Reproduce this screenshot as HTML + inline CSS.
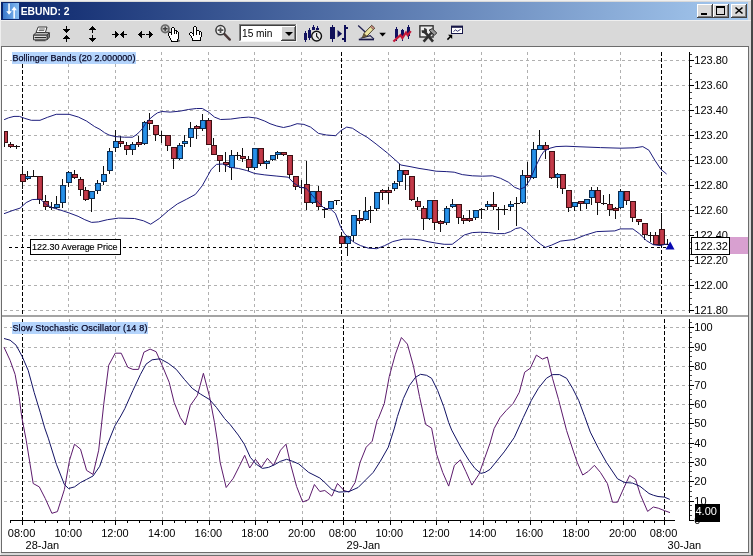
<!DOCTYPE html>
<html><head><meta charset="utf-8"><title>EBUND: 2</title>
<style>html,body{margin:0;padding:0;background:#d9d9d9;overflow:hidden}</style></head>
<body>
<svg width="753" height="556" viewBox="0 0 753 556" style="display:block;will-change:transform;-webkit-font-smoothing:antialiased">
<defs>
<linearGradient id="tg" x1="0" x2="1" y1="0" y2="0"><stop offset="0" stop-color="#0a246a"/><stop offset="1" stop-color="#a6caf0"/></linearGradient>
<linearGradient id="ig" x1="0" x2="1" y1="0" y2="0"><stop offset="0" stop-color="#3a78cc"/><stop offset="1" stop-color="#86bcf2"/></linearGradient>
<linearGradient id="cb" x1="0" x2="1" y1="0" y2="0"><stop offset="0" stop-color="#1a7cd4"/><stop offset="0.5" stop-color="#2c98ee"/><stop offset="1" stop-color="#1a7cd4"/></linearGradient>
<linearGradient id="cr" x1="0" x2="1" y1="0" y2="0"><stop offset="0" stop-color="#b02c3c"/><stop offset="0.5" stop-color="#c8404e"/><stop offset="1" stop-color="#b02c3c"/></linearGradient>
</defs>
<rect width="753" height="556" fill="#d9d9d9"/>
<g shape-rendering="crispEdges">
<rect x="0" y="0" width="753" height="1" fill="#efefef"/><rect x="0" y="0" width="1" height="556" fill="#efefef"/>
<rect x="1" y="2" width="747" height="18" fill="url(#tg)"/>
<rect x="3" y="3" width="16" height="16" fill="url(#ig)"/>
</g><path d="M8.3 3.6h1.5v7.6h2l-2.75 3.5l-2.75-3.5h2z M13.4 18.6h1.5v-8.4h2l-2.75-3.6l-2.75 3.6h2z" fill="#fff"/><g shape-rendering="crispEdges">
</g>
<text x="20.7" y="15" font-family="Liberation Sans, Arial, sans-serif" font-size="11" font-weight="bold" fill="#fff" textLength="48.8" lengthAdjust="spacingAndGlyphs">EBUND: 2</text>
<g shape-rendering="crispEdges"><rect x="697" y="4" width="16" height="14" fill="#404040"/><rect x="697" y="4" width="15" height="13" fill="#fff"/><rect x="698" y="5" width="14" height="12" fill="#808080"/><rect x="698" y="5" width="13" height="11" fill="#d9d9d9"/></g>
<g shape-rendering="crispEdges"><rect x="713" y="4" width="16" height="14" fill="#404040"/><rect x="713" y="4" width="15" height="13" fill="#fff"/><rect x="714" y="5" width="14" height="12" fill="#808080"/><rect x="714" y="5" width="13" height="11" fill="#d9d9d9"/></g>
<g shape-rendering="crispEdges"><rect x="731" y="4" width="16" height="14" fill="#404040"/><rect x="731" y="4" width="15" height="13" fill="#fff"/><rect x="732" y="5" width="14" height="12" fill="#808080"/><rect x="732" y="5" width="13" height="11" fill="#d9d9d9"/></g>
<g shape-rendering="crispEdges" fill="#000">
<rect x="701" y="13" width="6" height="2"/>
<path d="M716 6h9v9h-9z M717 8v6h7v-6z" fill-rule="evenodd"/>
</g>
<path d="M735.5 7.5l7 6m0-6l-7 6" stroke="#000" stroke-width="1.6" fill="none"/>
<g shape-rendering="crispEdges">
<rect x="0" y="20" width="753" height="1" fill="#efefef"/>
</g>
<g stroke="#383838" stroke-width="1" fill="none" stroke-linejoin="round">
<path d="M36 32.5l2.2-5.5h8.8l-1.6 5.5z" fill="#fff"/>
<path d="M39.2 29h5.6M38.6 30.6h5.6" stroke="#505050" stroke-width=".9"/>
<path d="M33.5 35.2l2.5-2.7h9.6l3.6.2-2.2 2.5z" fill="#b8b8b8"/>
<path d="M47 35.2l2.4-2.4v4.4l-2.4 2.6z" fill="#808080"/>
<rect x="33.5" y="35.2" width="13.5" height="4.6" fill="#dcdcdc"/>
<path d="M34.6 37.6h11.4" stroke="#202020" stroke-width="1.1"/>
<path d="M35 40.6h10.6" stroke="#505050" stroke-width="1.3"/>
</g>
<g shape-rendering="crispEdges"><rect x="66" y="26" width="1" height="1" fill="#000"/><rect x="66" y="27" width="1" height="1" fill="#000"/><rect x="66" y="28" width="1" height="1" fill="#000"/><rect x="63" y="29" width="7" height="1" fill="#000"/><rect x="64" y="30" width="5" height="1" fill="#000"/><rect x="65" y="31" width="3" height="1" fill="#000"/><rect x="66" y="32" width="1" height="1" fill="#000"/></g>
<g shape-rendering="crispEdges"><rect x="66" y="35" width="1" height="1" fill="#000"/><rect x="65" y="36" width="3" height="1" fill="#000"/><rect x="64" y="37" width="5" height="1" fill="#000"/><rect x="63" y="38" width="7" height="1" fill="#000"/><rect x="66" y="39" width="1" height="1" fill="#000"/><rect x="66" y="40" width="1" height="1" fill="#000"/><rect x="66" y="41" width="1" height="1" fill="#000"/></g>
<g shape-rendering="crispEdges"><rect x="92" y="26" width="1" height="1" fill="#000"/><rect x="91" y="27" width="3" height="1" fill="#000"/><rect x="90" y="28" width="5" height="1" fill="#000"/><rect x="89" y="29" width="7" height="1" fill="#000"/><rect x="92" y="30" width="1" height="1" fill="#000"/><rect x="92" y="31" width="1" height="1" fill="#000"/><rect x="92" y="32" width="1" height="1" fill="#000"/></g>
<g shape-rendering="crispEdges"><rect x="92" y="35" width="1" height="1" fill="#000"/><rect x="92" y="36" width="1" height="1" fill="#000"/><rect x="92" y="37" width="1" height="1" fill="#000"/><rect x="89" y="38" width="7" height="1" fill="#000"/><rect x="90" y="39" width="5" height="1" fill="#000"/><rect x="91" y="40" width="3" height="1" fill="#000"/><rect x="92" y="41" width="1" height="1" fill="#000"/></g>
<g shape-rendering="crispEdges"><rect x="115" y="31" width="1" height="1" fill="#000"/><rect x="115" y="32" width="2" height="1" fill="#000"/><rect x="115" y="33" width="3" height="1" fill="#000"/><rect x="112" y="34" width="7" height="1" fill="#000"/><rect x="115" y="35" width="3" height="1" fill="#000"/><rect x="115" y="36" width="2" height="1" fill="#000"/><rect x="115" y="37" width="1" height="1" fill="#000"/></g>
<g shape-rendering="crispEdges"><rect x="123" y="31" width="1" height="1" fill="#000"/><rect x="122" y="32" width="2" height="1" fill="#000"/><rect x="121" y="33" width="3" height="1" fill="#000"/><rect x="120" y="34" width="7" height="1" fill="#000"/><rect x="121" y="35" width="3" height="1" fill="#000"/><rect x="122" y="36" width="2" height="1" fill="#000"/><rect x="123" y="37" width="1" height="1" fill="#000"/></g>
<g shape-rendering="crispEdges"><rect x="141" y="31" width="1" height="1" fill="#000"/><rect x="140" y="32" width="2" height="1" fill="#000"/><rect x="139" y="33" width="3" height="1" fill="#000"/><rect x="138" y="34" width="7" height="1" fill="#000"/><rect x="139" y="35" width="3" height="1" fill="#000"/><rect x="140" y="36" width="2" height="1" fill="#000"/><rect x="141" y="37" width="1" height="1" fill="#000"/></g>
<g shape-rendering="crispEdges"><rect x="149" y="31" width="1" height="1" fill="#000"/><rect x="149" y="32" width="2" height="1" fill="#000"/><rect x="149" y="33" width="3" height="1" fill="#000"/><rect x="146" y="34" width="7" height="1" fill="#000"/><rect x="149" y="35" width="3" height="1" fill="#000"/><rect x="149" y="36" width="2" height="1" fill="#000"/><rect x="149" y="37" width="1" height="1" fill="#000"/></g>
<circle cx="165.2" cy="28.8" r="3.8" fill="#c8c8c8" stroke="#686868" stroke-width="1.7"/><path d="M162.8 28.8h4.8M165.2 26.4v4.8" stroke="#404040" stroke-width="1.5"/>
<path d="M168 31l11.6 10.6" stroke="#606060" stroke-width="2"/>
<g shape-rendering="crispEdges"><rect x="172" y="27" width="2" height="1" fill="#000"/><rect x="171" y="28" width="1" height="1" fill="#000"/><rect x="172" y="28" width="2" height="1" fill="#fff"/><rect x="174" y="28" width="1" height="1" fill="#000"/><rect x="171" y="29" width="1" height="1" fill="#000"/><rect x="172" y="29" width="2" height="1" fill="#fff"/><rect x="174" y="29" width="1" height="1" fill="#000"/><rect x="171" y="30" width="1" height="1" fill="#000"/><rect x="172" y="30" width="2" height="1" fill="#fff"/><rect x="174" y="30" width="3" height="1" fill="#000"/><rect x="171" y="31" width="1" height="1" fill="#000"/><rect x="172" y="31" width="2" height="1" fill="#fff"/><rect x="174" y="31" width="1" height="1" fill="#000"/><rect x="175" y="31" width="1" height="1" fill="#fff"/><rect x="176" y="31" width="2" height="1" fill="#000"/><rect x="169" y="32" width="3" height="1" fill="#000"/><rect x="172" y="32" width="2" height="1" fill="#fff"/><rect x="174" y="32" width="1" height="1" fill="#000"/><rect x="175" y="32" width="1" height="1" fill="#fff"/><rect x="176" y="32" width="1" height="1" fill="#000"/><rect x="177" y="32" width="1" height="1" fill="#fff"/><rect x="178" y="32" width="1" height="1" fill="#000"/><rect x="168" y="33" width="1" height="1" fill="#000"/><rect x="169" y="33" width="2" height="1" fill="#fff"/><rect x="171" y="33" width="1" height="1" fill="#000"/><rect x="172" y="33" width="2" height="1" fill="#fff"/><rect x="174" y="33" width="1" height="1" fill="#000"/><rect x="175" y="33" width="1" height="1" fill="#fff"/><rect x="176" y="33" width="1" height="1" fill="#000"/><rect x="177" y="33" width="1" height="1" fill="#fff"/><rect x="178" y="33" width="1" height="1" fill="#000"/><rect x="168" y="34" width="1" height="1" fill="#000"/><rect x="169" y="34" width="2" height="1" fill="#fff"/><rect x="171" y="34" width="1" height="1" fill="#000"/><rect x="172" y="34" width="6" height="1" fill="#fff"/><rect x="178" y="34" width="1" height="1" fill="#000"/><rect x="168" y="35" width="1" height="1" fill="#000"/><rect x="169" y="35" width="9" height="1" fill="#fff"/><rect x="178" y="35" width="1" height="1" fill="#000"/><rect x="169" y="36" width="1" height="1" fill="#000"/><rect x="170" y="36" width="8" height="1" fill="#fff"/><rect x="178" y="36" width="1" height="1" fill="#000"/><rect x="169" y="37" width="1" height="1" fill="#000"/><rect x="170" y="37" width="8" height="1" fill="#fff"/><rect x="178" y="37" width="1" height="1" fill="#000"/><rect x="170" y="38" width="1" height="1" fill="#000"/><rect x="171" y="38" width="7" height="1" fill="#fff"/><rect x="178" y="38" width="1" height="1" fill="#000"/><rect x="170" y="39" width="1" height="1" fill="#000"/><rect x="171" y="39" width="6" height="1" fill="#fff"/><rect x="177" y="39" width="1" height="1" fill="#000"/><rect x="171" y="40" width="1" height="1" fill="#000"/><rect x="172" y="40" width="5" height="1" fill="#fff"/><rect x="177" y="40" width="1" height="1" fill="#000"/><rect x="171" y="41" width="7" height="1" fill="#000"/></g>
<g shape-rendering="crispEdges"><rect x="194" y="26" width="2" height="1" fill="#000"/><rect x="193" y="27" width="1" height="1" fill="#000"/><rect x="194" y="27" width="2" height="1" fill="#fff"/><rect x="196" y="27" width="1" height="1" fill="#000"/><rect x="193" y="28" width="1" height="1" fill="#000"/><rect x="194" y="28" width="2" height="1" fill="#fff"/><rect x="196" y="28" width="1" height="1" fill="#000"/><rect x="193" y="29" width="1" height="1" fill="#000"/><rect x="194" y="29" width="2" height="1" fill="#fff"/><rect x="196" y="29" width="1" height="1" fill="#000"/><rect x="193" y="30" width="1" height="1" fill="#000"/><rect x="194" y="30" width="2" height="1" fill="#fff"/><rect x="196" y="30" width="3" height="1" fill="#000"/><rect x="193" y="31" width="1" height="1" fill="#000"/><rect x="194" y="31" width="2" height="1" fill="#fff"/><rect x="196" y="31" width="1" height="1" fill="#000"/><rect x="197" y="31" width="2" height="1" fill="#fff"/><rect x="199" y="31" width="2" height="1" fill="#000"/><rect x="190" y="32" width="2" height="1" fill="#000"/><rect x="193" y="32" width="1" height="1" fill="#000"/><rect x="194" y="32" width="2" height="1" fill="#fff"/><rect x="196" y="32" width="1" height="1" fill="#000"/><rect x="197" y="32" width="2" height="1" fill="#fff"/><rect x="199" y="32" width="1" height="1" fill="#000"/><rect x="200" y="32" width="1" height="1" fill="#fff"/><rect x="201" y="32" width="1" height="1" fill="#000"/><rect x="189" y="33" width="1" height="1" fill="#000"/><rect x="190" y="33" width="2" height="1" fill="#fff"/><rect x="192" y="33" width="2" height="1" fill="#000"/><rect x="194" y="33" width="2" height="1" fill="#fff"/><rect x="196" y="33" width="1" height="1" fill="#000"/><rect x="197" y="33" width="2" height="1" fill="#fff"/><rect x="199" y="33" width="1" height="1" fill="#000"/><rect x="200" y="33" width="1" height="1" fill="#fff"/><rect x="201" y="33" width="1" height="1" fill="#000"/><rect x="189" y="34" width="1" height="1" fill="#000"/><rect x="190" y="34" width="3" height="1" fill="#fff"/><rect x="193" y="34" width="1" height="1" fill="#000"/><rect x="194" y="34" width="2" height="1" fill="#fff"/><rect x="196" y="34" width="1" height="1" fill="#000"/><rect x="197" y="34" width="2" height="1" fill="#fff"/><rect x="199" y="34" width="1" height="1" fill="#000"/><rect x="200" y="34" width="1" height="1" fill="#fff"/><rect x="201" y="34" width="1" height="1" fill="#000"/><rect x="190" y="35" width="1" height="1" fill="#000"/><rect x="191" y="35" width="2" height="1" fill="#fff"/><rect x="193" y="35" width="1" height="1" fill="#000"/><rect x="194" y="35" width="7" height="1" fill="#fff"/><rect x="201" y="35" width="1" height="1" fill="#000"/><rect x="191" y="36" width="1" height="1" fill="#000"/><rect x="192" y="36" width="9" height="1" fill="#fff"/><rect x="201" y="36" width="1" height="1" fill="#000"/><rect x="191" y="37" width="1" height="1" fill="#000"/><rect x="192" y="37" width="8" height="1" fill="#fff"/><rect x="200" y="37" width="1" height="1" fill="#000"/><rect x="192" y="38" width="1" height="1" fill="#000"/><rect x="193" y="38" width="7" height="1" fill="#fff"/><rect x="200" y="38" width="1" height="1" fill="#000"/><rect x="192" y="39" width="1" height="1" fill="#000"/><rect x="193" y="39" width="7" height="1" fill="#fff"/><rect x="200" y="39" width="1" height="1" fill="#000"/><rect x="192" y="40" width="9" height="1" fill="#000"/></g>
<path d="M224 33.6l5.8 6" stroke="#4c3a3a" stroke-width="2.4" stroke-linecap="round"/>
<circle cx="220.5" cy="30.2" r="4.6" fill="#f0f0f0" stroke="#383838" stroke-width="1.5"/><path d="M217.7 30.2h5.6M220.5 27.4v5.6" stroke="#505050" stroke-width="1.8"/>
<g shape-rendering="crispEdges">
<rect x="239" y="24" width="58" height="18" fill="#f4f4f4"/>
<rect x="239" y="24" width="57" height="17" fill="#808080"/>
<rect x="240" y="25" width="56" height="16" fill="#a8a8a8"/>
<rect x="240" y="25" width="55" height="15" fill="#404040"/>
<rect x="241" y="26" width="55" height="15" fill="#fff"/>
<rect x="281" y="26" width="15" height="15" fill="#404040"/><rect x="281" y="26" width="14" height="14" fill="#fff"/><rect x="282" y="27" width="13" height="13" fill="#808080"/><rect x="282" y="27" width="12" height="12" fill="#d0d0d0"/>
</g>
<path d="M285 32h8l-4 4z" fill="#000"/>
<text x="242" y="37" font-family="Liberation Sans, Arial, sans-serif" font-size="11" fill="#000" textLength="30.5" lengthAdjust="spacingAndGlyphs">15 min</text>
<g shape-rendering="crispEdges" fill="#121260">
<rect x="305" y="31" width="1" height="11"/><rect x="304" y="33" width="3" height="7"/>
<rect x="309" y="28" width="1" height="12"/><rect x="308" y="30" width="3" height="8"/>
<rect x="313" y="25" width="1" height="3"/><rect x="312" y="27" width="3" height="3"/>
<rect x="317" y="26" width="1" height="3"/><rect x="316" y="28" width="3" height="2"/>
</g>
<circle cx="316.6" cy="36.1" r="4.9" fill="#ececec" stroke="#101010" stroke-width="1.4"/><path d="M316.6 33v3.2l2.2 2.4" stroke="#101010" stroke-width="1.1" fill="none"/>
<g shape-rendering="crispEdges" fill="#10105a">
<rect x="332" y="25" width="1" height="17"/><rect x="330" y="27" width="5" height="12"/>
<rect x="344" y="25" width="2" height="17"/><rect x="346" y="27" width="2" height="2"/><rect x="342" y="38" width="2" height="2"/>
</g>
<path d="M337.5 30v7.4l4.6-3.7z" fill="#10105a"/>
<path d="M358.2 25.5l8.3 7.7" stroke="#202050" stroke-width="1.3" fill="none"/>
<path d="M358.8 39.5h15.2" stroke="#181848" stroke-width="1.7" fill="none"/>
<path d="M360.6 38.2l9.6-2.6 3.8 3.6" stroke="#202050" stroke-width="1.1" fill="none"/>
<path d="M362.4 37.5l1.7-4.3 7.5-7.8 3 2.7-7.6 8z" fill="#ece4a2" stroke="#403820" stroke-width=".9" stroke-linejoin="round"/>
<path d="M362.4 37.5l1.7-4.3 2.9 2.9z" fill="#6a5838"/>
<path d="M370.3 26.8l1.3-1.4 3 2.7-1.2 1.4z" fill="#d89090" stroke="#403820" stroke-width=".6"/>
<path d="M379.3 32.8h6.6l-3.3 3.8z" fill="#000"/>
<g shape-rendering="crispEdges" fill="#121260">
<rect x="396" y="27" width="1" height="14"/><rect x="395" y="29" width="3" height="9"/>
<rect x="402" y="29" width="1" height="12"/><rect x="401" y="30" width="3" height="7"/>
<rect x="408" y="25" width="1" height="14"/><rect x="407" y="27" width="3" height="9"/>
</g>
<path d="M393.4 41.5l7-6.4 2 3 3.6-5.6 1.6 2.6 3.2-4" stroke="#c41838" stroke-width="2.2" fill="none"/>
<rect x="419.9" y="25.8" width="13.2" height="11.2" fill="#ececec" stroke="#303030" stroke-width="1.4"/>
<path d="M423.6 41.6l8.6-9.6" stroke="#303030" stroke-width="2.6" fill="none"/>
<path d="M433 41.6l-8-9.4" stroke="#303030" stroke-width="2.6" fill="none"/>
<path d="M421.5 30.2h2.6v-2.4l2.6 1.2.4 3-2.2 1.6-3-.8z" fill="#303030"/>
<path d="M429 30.2l3.2-1.6 4.6 4.4-2.4 2.2z" fill="#989898" stroke="#303030" stroke-width="1"/>
<rect x="451.5" y="26.5" width="11" height="7" fill="#fff" stroke="#181848" stroke-width="1"/><rect x="451" y="25.6" width="12" height="2.2" fill="#181848"/>
<path d="M453.5 31.5l2-1.6 2 1.4 3.2-2" stroke="#202060" stroke-width=".9" fill="none"/>
<path d="M447.4 39.6l3.6-3.6" stroke="#000" stroke-width="1.5"/><path d="M448 34.8h4.2v4.2z" fill="#000"/>
<g shape-rendering="crispEdges">
<rect x="1" y="46" width="748" height="507" fill="#6c6c6c"/>
<rect x="751" y="0" width="2" height="556" fill="#484848"/>
<rect x="0" y="555" width="753" height="1" fill="#707070"/>
<rect x="2" y="47" width="746" height="505" fill="#fff"/>
<rect x="2" y="315" width="746" height="2" fill="#a4a4a4"/>
</g>
<g shape-rendering="crispEdges" stroke="#b0b0b0" stroke-width="1" stroke-dasharray="3 3" fill="none">
<path d="M4 60.5H689"/>
<path d="M4 85.5H689"/>
<path d="M4 110.5H689"/>
<path d="M4 135.5H689"/>
<path d="M4 160.5H689"/>
<path d="M4 185.5H689"/>
<path d="M4 210.5H689"/>
<path d="M4 235.5H689"/>
<path d="M4 260.5H689"/>
<path d="M4 285.5H689"/>
<path d="M4 310.5H689"/>
<path d="M68.5 52V314"/>
<path d="M115.5 52V314"/>
<path d="M161.5 52V314"/>
<path d="M208.5 52V314"/>
<path d="M254.5 52V314"/>
<path d="M301.5 52V314"/>
<path d="M388.5 52V314"/>
<path d="M434.5 52V314"/>
<path d="M481.5 52V314"/>
<path d="M527.5 52V314"/>
<path d="M574.5 52V314"/>
<path d="M620.5 52V314"/>
<path d="M4 501.5H689"/>
<path d="M4 481.5H689"/>
<path d="M4 462.5H689"/>
<path d="M4 443.5H689"/>
<path d="M4 423.5H689"/>
<path d="M4 404.5H689"/>
<path d="M4 385.5H689"/>
<path d="M4 366.5H689"/>
<path d="M4 347.5H689"/>
<path d="M4 327.5H689"/>
<path d="M69.5 319V520"/>
<path d="M115.5 319V520"/>
<path d="M162.5 319V520"/>
<path d="M209.5 319V520"/>
<path d="M255.5 319V520"/>
<path d="M302.5 319V520"/>
<path d="M390.5 319V520"/>
<path d="M436.5 319V520"/>
<path d="M483.5 319V520"/>
<path d="M530.5 319V520"/>
<path d="M576.5 319V520"/>
<path d="M623.5 319V520"/>
</g>
<g shape-rendering="crispEdges" stroke="#000" stroke-width="1" stroke-dasharray="4 2" fill="none">
<path d="M22.5 52V314"/>
<path d="M341.5 52V314"/>
<path d="M661.5 52V314"/>
<path d="M22.5 319V520"/>
<path d="M343.5 319V520"/>
<path d="M664.5 319V520"/>
</g>
<path d="M9 247.5H667" stroke="#000" stroke-width="1" stroke-dasharray="3 3" shape-rendering="crispEdges"/>
<g shape-rendering="crispEdges">
<rect x="4" y="131" width="1" height="16" fill="#101010"/>
<rect x="4" y="131" width="4" height="12" fill="#3c1014"/>
<rect x="5" y="132" width="2" height="10" fill="url(#cr)"/>
<rect x="10" y="142" width="1" height="6" fill="#101010"/>
<rect x="8" y="144" width="6" height="3" fill="#3c1014"/>
<rect x="9" y="145" width="4" height="1" fill="url(#cr)"/>
<rect x="16" y="145" width="1" height="4" fill="#101010"/>
<rect x="14" y="146" width="6" height="1" fill="#181010"/>
<rect x="22" y="167" width="1" height="22" fill="#101010"/>
<rect x="20" y="174" width="6" height="8" fill="#3c1014"/>
<rect x="21" y="175" width="4" height="6" fill="url(#cr)"/>
<rect x="27" y="171" width="1" height="9" fill="#101010"/>
<rect x="25" y="176" width="6" height="3" fill="#0c2c50"/>
<rect x="26" y="177" width="4" height="1" fill="url(#cb)"/>
<rect x="33" y="170" width="1" height="7" fill="#101010"/>
<rect x="31" y="176" width="6" height="1" fill="#181010"/>
<rect x="39" y="176" width="1" height="28" fill="#101010"/>
<rect x="37" y="176" width="6" height="24" fill="#3c1014"/>
<rect x="38" y="177" width="4" height="22" fill="url(#cr)"/>
<rect x="45" y="195" width="1" height="15" fill="#101010"/>
<rect x="43" y="201" width="6" height="6" fill="#3c1014"/>
<rect x="44" y="202" width="4" height="4" fill="url(#cr)"/>
<rect x="51" y="202" width="1" height="8" fill="#101010"/>
<rect x="49" y="207" width="6" height="1" fill="#181010"/>
<rect x="56" y="196" width="1" height="13" fill="#101010"/>
<rect x="54" y="204" width="6" height="4" fill="#0c2c50"/>
<rect x="55" y="205" width="4" height="2" fill="url(#cb)"/>
<rect x="62" y="179" width="1" height="29" fill="#101010"/>
<rect x="60" y="185" width="6" height="18" fill="#0c2c50"/>
<rect x="61" y="186" width="4" height="16" fill="url(#cb)"/>
<rect x="68" y="171" width="1" height="16" fill="#101010"/>
<rect x="66" y="172" width="6" height="11" fill="#0c2c50"/>
<rect x="67" y="173" width="4" height="9" fill="url(#cb)"/>
<rect x="74" y="170" width="1" height="9" fill="#101010"/>
<rect x="72" y="174" width="6" height="4" fill="#3c1014"/>
<rect x="73" y="175" width="4" height="2" fill="url(#cr)"/>
<rect x="80" y="177" width="1" height="19" fill="#101010"/>
<rect x="78" y="179" width="6" height="11" fill="#3c1014"/>
<rect x="79" y="180" width="4" height="9" fill="url(#cr)"/>
<rect x="85" y="187" width="1" height="14" fill="#101010"/>
<rect x="83" y="190" width="6" height="10" fill="#3c1014"/>
<rect x="84" y="191" width="4" height="8" fill="url(#cr)"/>
<rect x="91" y="191" width="1" height="21" fill="#101010"/>
<rect x="89" y="191" width="6" height="8" fill="#0c2c50"/>
<rect x="90" y="192" width="4" height="6" fill="url(#cb)"/>
<rect x="97" y="180" width="1" height="14" fill="#101010"/>
<rect x="95" y="183" width="6" height="8" fill="#0c2c50"/>
<rect x="96" y="184" width="4" height="6" fill="url(#cb)"/>
<rect x="103" y="166" width="1" height="19" fill="#101010"/>
<rect x="101" y="174" width="6" height="8" fill="#0c2c50"/>
<rect x="102" y="175" width="4" height="6" fill="url(#cb)"/>
<rect x="109" y="148" width="1" height="26" fill="#101010"/>
<rect x="107" y="151" width="6" height="20" fill="#0c2c50"/>
<rect x="108" y="152" width="4" height="18" fill="url(#cb)"/>
<rect x="115" y="130" width="1" height="22" fill="#101010"/>
<rect x="113" y="141" width="6" height="7" fill="#0c2c50"/>
<rect x="114" y="142" width="4" height="5" fill="url(#cb)"/>
<rect x="120" y="136" width="1" height="11" fill="#101010"/>
<rect x="118" y="141" width="6" height="3" fill="#3c1014"/>
<rect x="119" y="142" width="4" height="1" fill="url(#cr)"/>
<rect x="126" y="142" width="1" height="13" fill="#101010"/>
<rect x="124" y="145" width="6" height="5" fill="#3c1014"/>
<rect x="125" y="146" width="4" height="3" fill="url(#cr)"/>
<rect x="132" y="142" width="1" height="13" fill="#101010"/>
<rect x="130" y="144" width="6" height="6" fill="#0c2c50"/>
<rect x="131" y="145" width="4" height="4" fill="url(#cb)"/>
<rect x="138" y="136" width="1" height="11" fill="#101010"/>
<rect x="136" y="142" width="6" height="3" fill="#3c1014"/>
<rect x="137" y="143" width="4" height="1" fill="url(#cr)"/>
<rect x="144" y="121" width="1" height="24" fill="#101010"/>
<rect x="142" y="122" width="6" height="22" fill="#0c2c50"/>
<rect x="143" y="123" width="4" height="20" fill="url(#cb)"/>
<rect x="149" y="113" width="1" height="17" fill="#101010"/>
<rect x="147" y="120" width="6" height="4" fill="#3c1014"/>
<rect x="148" y="121" width="4" height="2" fill="url(#cr)"/>
<rect x="155" y="125" width="1" height="16" fill="#101010"/>
<rect x="153" y="125" width="6" height="10" fill="#3c1014"/>
<rect x="154" y="126" width="4" height="8" fill="url(#cr)"/>
<rect x="161" y="131" width="1" height="12" fill="#101010"/>
<rect x="159" y="135" width="6" height="1" fill="#181010"/>
<rect x="167" y="135" width="1" height="16" fill="#101010"/>
<rect x="165" y="135" width="6" height="11" fill="#3c1014"/>
<rect x="166" y="136" width="4" height="9" fill="url(#cr)"/>
<rect x="173" y="147" width="1" height="22" fill="#101010"/>
<rect x="171" y="147" width="6" height="12" fill="#3c1014"/>
<rect x="172" y="148" width="4" height="10" fill="url(#cr)"/>
<rect x="179" y="143" width="1" height="17" fill="#101010"/>
<rect x="177" y="145" width="6" height="14" fill="#0c2c50"/>
<rect x="178" y="146" width="4" height="12" fill="url(#cb)"/>
<rect x="184" y="135" width="1" height="12" fill="#101010"/>
<rect x="182" y="141" width="6" height="3" fill="#0c2c50"/>
<rect x="183" y="142" width="4" height="1" fill="url(#cb)"/>
<rect x="190" y="122" width="1" height="25" fill="#101010"/>
<rect x="188" y="128" width="6" height="10" fill="#0c2c50"/>
<rect x="189" y="129" width="4" height="8" fill="url(#cb)"/>
<rect x="196" y="125" width="1" height="14" fill="#101010"/>
<rect x="194" y="126" width="6" height="3" fill="#3c1014"/>
<rect x="195" y="127" width="4" height="1" fill="url(#cr)"/>
<rect x="202" y="114" width="1" height="17" fill="#101010"/>
<rect x="200" y="120" width="6" height="9" fill="#0c2c50"/>
<rect x="201" y="121" width="4" height="7" fill="url(#cb)"/>
<rect x="208" y="118" width="1" height="27" fill="#101010"/>
<rect x="206" y="120" width="6" height="25" fill="#3c1014"/>
<rect x="207" y="121" width="4" height="23" fill="url(#cr)"/>
<rect x="213" y="138" width="1" height="17" fill="#101010"/>
<rect x="211" y="145" width="6" height="10" fill="#3c1014"/>
<rect x="212" y="146" width="4" height="8" fill="url(#cr)"/>
<rect x="219" y="155" width="1" height="17" fill="#101010"/>
<rect x="217" y="155" width="6" height="6" fill="#3c1014"/>
<rect x="218" y="156" width="4" height="4" fill="url(#cr)"/>
<rect x="225" y="152" width="1" height="20" fill="#101010"/>
<rect x="223" y="162" width="6" height="3" fill="#3c1014"/>
<rect x="224" y="163" width="4" height="1" fill="url(#cr)"/>
<rect x="231" y="150" width="1" height="30" fill="#101010"/>
<rect x="229" y="155" width="6" height="13" fill="#0c2c50"/>
<rect x="230" y="156" width="4" height="11" fill="url(#cb)"/>
<rect x="237" y="152" width="1" height="8" fill="#101010"/>
<rect x="235" y="155" width="6" height="1" fill="#181010"/>
<rect x="242" y="148" width="1" height="14" fill="#101010"/>
<rect x="240" y="156" width="6" height="3" fill="#3c1014"/>
<rect x="241" y="157" width="4" height="1" fill="url(#cr)"/>
<rect x="248" y="156" width="1" height="15" fill="#101010"/>
<rect x="246" y="159" width="6" height="9" fill="#3c1014"/>
<rect x="247" y="160" width="4" height="7" fill="url(#cr)"/>
<rect x="254" y="148" width="1" height="22" fill="#101010"/>
<rect x="252" y="148" width="6" height="20" fill="#0c2c50"/>
<rect x="253" y="149" width="4" height="18" fill="url(#cb)"/>
<rect x="260" y="148" width="1" height="18" fill="#101010"/>
<rect x="258" y="148" width="6" height="16" fill="#3c1014"/>
<rect x="259" y="149" width="4" height="14" fill="url(#cr)"/>
<rect x="266" y="160" width="1" height="9" fill="#101010"/>
<rect x="264" y="161" width="6" height="3" fill="#0c2c50"/>
<rect x="265" y="162" width="4" height="1" fill="url(#cb)"/>
<rect x="272" y="155" width="1" height="6" fill="#101010"/>
<rect x="270" y="155" width="6" height="5" fill="#0c2c50"/>
<rect x="271" y="156" width="4" height="3" fill="url(#cb)"/>
<rect x="277" y="151" width="1" height="8" fill="#101010"/>
<rect x="275" y="152" width="6" height="3" fill="#0c2c50"/>
<rect x="276" y="153" width="4" height="1" fill="url(#cb)"/>
<rect x="283" y="152" width="1" height="4" fill="#101010"/>
<rect x="281" y="152" width="6" height="3" fill="#3c1014"/>
<rect x="282" y="153" width="4" height="1" fill="url(#cr)"/>
<rect x="289" y="155" width="1" height="23" fill="#101010"/>
<rect x="287" y="155" width="6" height="20" fill="#3c1014"/>
<rect x="288" y="156" width="4" height="18" fill="url(#cr)"/>
<rect x="295" y="176" width="1" height="14" fill="#101010"/>
<rect x="293" y="176" width="6" height="11" fill="#3c1014"/>
<rect x="294" y="177" width="4" height="9" fill="url(#cr)"/>
<rect x="301" y="180" width="1" height="14" fill="#101010"/>
<rect x="299" y="187" width="6" height="1" fill="#181010"/>
<rect x="306" y="161" width="1" height="49" fill="#101010"/>
<rect x="304" y="184" width="6" height="19" fill="#3c1014"/>
<rect x="305" y="185" width="4" height="17" fill="url(#cr)"/>
<rect x="312" y="191" width="1" height="13" fill="#101010"/>
<rect x="310" y="191" width="6" height="12" fill="#0c2c50"/>
<rect x="311" y="192" width="4" height="10" fill="url(#cb)"/>
<rect x="318" y="186" width="1" height="24" fill="#101010"/>
<rect x="316" y="191" width="6" height="16" fill="#3c1014"/>
<rect x="317" y="192" width="4" height="14" fill="url(#cr)"/>
<rect x="324" y="207" width="1" height="11" fill="#101010"/>
<rect x="322" y="209" width="6" height="1" fill="#181010"/>
<rect x="330" y="201" width="1" height="8" fill="#101010"/>
<rect x="328" y="201" width="6" height="8" fill="#0c2c50"/>
<rect x="329" y="202" width="4" height="6" fill="url(#cb)"/>
<rect x="336" y="200" width="1" height="5" fill="#101010"/>
<rect x="334" y="200" width="6" height="1" fill="#181010"/>
<rect x="341" y="236" width="1" height="10" fill="#101010"/>
<rect x="339" y="236" width="6" height="8" fill="#3c1014"/>
<rect x="340" y="237" width="4" height="6" fill="url(#cr)"/>
<rect x="347" y="236" width="1" height="20" fill="#101010"/>
<rect x="345" y="236" width="6" height="8" fill="#0c2c50"/>
<rect x="346" y="237" width="4" height="6" fill="url(#cb)"/>
<rect x="353" y="215" width="1" height="27" fill="#101010"/>
<rect x="351" y="215" width="6" height="21" fill="#0c2c50"/>
<rect x="352" y="216" width="4" height="19" fill="url(#cb)"/>
<rect x="359" y="210" width="1" height="14" fill="#101010"/>
<rect x="357" y="218" width="6" height="3" fill="#3c1014"/>
<rect x="358" y="219" width="4" height="1" fill="url(#cr)"/>
<rect x="365" y="197" width="1" height="24" fill="#101010"/>
<rect x="363" y="211" width="6" height="9" fill="#0c2c50"/>
<rect x="364" y="212" width="4" height="7" fill="url(#cb)"/>
<rect x="370" y="206" width="1" height="17" fill="#101010"/>
<rect x="368" y="210" width="6" height="1" fill="#181010"/>
<rect x="376" y="192" width="1" height="19" fill="#101010"/>
<rect x="374" y="192" width="6" height="17" fill="#0c2c50"/>
<rect x="375" y="193" width="4" height="15" fill="url(#cb)"/>
<rect x="382" y="189" width="1" height="11" fill="#101010"/>
<rect x="380" y="190" width="6" height="3" fill="#3c1014"/>
<rect x="381" y="191" width="4" height="1" fill="url(#cr)"/>
<rect x="388" y="187" width="1" height="17" fill="#101010"/>
<rect x="386" y="190" width="6" height="3" fill="#3c1014"/>
<rect x="387" y="191" width="4" height="1" fill="url(#cr)"/>
<rect x="394" y="181" width="1" height="10" fill="#101010"/>
<rect x="392" y="183" width="6" height="6" fill="#0c2c50"/>
<rect x="393" y="184" width="4" height="4" fill="url(#cb)"/>
<rect x="399" y="164" width="1" height="22" fill="#101010"/>
<rect x="397" y="170" width="6" height="12" fill="#0c2c50"/>
<rect x="398" y="171" width="4" height="10" fill="url(#cb)"/>
<rect x="405" y="170" width="1" height="20" fill="#101010"/>
<rect x="403" y="170" width="6" height="5" fill="#3c1014"/>
<rect x="404" y="171" width="4" height="3" fill="url(#cr)"/>
<rect x="411" y="176" width="1" height="25" fill="#101010"/>
<rect x="409" y="176" width="6" height="24" fill="#3c1014"/>
<rect x="410" y="177" width="4" height="22" fill="url(#cr)"/>
<rect x="417" y="197" width="1" height="13" fill="#101010"/>
<rect x="415" y="201" width="6" height="6" fill="#3c1014"/>
<rect x="416" y="202" width="4" height="4" fill="url(#cr)"/>
<rect x="423" y="206" width="1" height="24" fill="#101010"/>
<rect x="421" y="208" width="6" height="11" fill="#3c1014"/>
<rect x="422" y="209" width="4" height="9" fill="url(#cr)"/>
<rect x="429" y="200" width="1" height="20" fill="#101010"/>
<rect x="427" y="200" width="6" height="19" fill="#0c2c50"/>
<rect x="428" y="201" width="4" height="17" fill="url(#cb)"/>
<rect x="434" y="200" width="1" height="30" fill="#101010"/>
<rect x="432" y="200" width="6" height="23" fill="#3c1014"/>
<rect x="433" y="201" width="4" height="21" fill="url(#cr)"/>
<rect x="440" y="220" width="1" height="12" fill="#101010"/>
<rect x="438" y="221" width="6" height="3" fill="#3c1014"/>
<rect x="439" y="222" width="4" height="1" fill="url(#cr)"/>
<rect x="446" y="206" width="1" height="19" fill="#101010"/>
<rect x="444" y="208" width="6" height="15" fill="#0c2c50"/>
<rect x="445" y="209" width="4" height="13" fill="url(#cb)"/>
<rect x="452" y="199" width="1" height="9" fill="#101010"/>
<rect x="450" y="204" width="6" height="3" fill="#0c2c50"/>
<rect x="451" y="205" width="4" height="1" fill="url(#cb)"/>
<rect x="458" y="204" width="1" height="20" fill="#101010"/>
<rect x="456" y="204" width="6" height="14" fill="#3c1014"/>
<rect x="457" y="205" width="4" height="12" fill="url(#cr)"/>
<rect x="463" y="215" width="1" height="9" fill="#101010"/>
<rect x="461" y="218" width="6" height="3" fill="#3c1014"/>
<rect x="462" y="219" width="4" height="1" fill="url(#cr)"/>
<rect x="469" y="210" width="1" height="12" fill="#101010"/>
<rect x="467" y="218" width="6" height="3" fill="#3c1014"/>
<rect x="468" y="219" width="4" height="1" fill="url(#cr)"/>
<rect x="475" y="210" width="1" height="10" fill="#101010"/>
<rect x="473" y="210" width="6" height="8" fill="#0c2c50"/>
<rect x="474" y="211" width="4" height="6" fill="url(#cb)"/>
<rect x="481" y="208" width="1" height="11" fill="#101010"/>
<rect x="479" y="209" width="6" height="1" fill="#181010"/>
<rect x="487" y="201" width="1" height="9" fill="#101010"/>
<rect x="485" y="204" width="6" height="3" fill="#0c2c50"/>
<rect x="486" y="205" width="4" height="1" fill="url(#cb)"/>
<rect x="493" y="192" width="1" height="18" fill="#101010"/>
<rect x="491" y="204" width="6" height="3" fill="#3c1014"/>
<rect x="492" y="205" width="4" height="1" fill="url(#cr)"/>
<rect x="498" y="207" width="1" height="23" fill="#101010"/>
<rect x="496" y="209" width="6" height="1" fill="#181010"/>
<rect x="504" y="205" width="1" height="10" fill="#101010"/>
<rect x="502" y="209" width="6" height="1" fill="#181010"/>
<rect x="510" y="201" width="1" height="10" fill="#101010"/>
<rect x="508" y="204" width="6" height="3" fill="#0c2c50"/>
<rect x="509" y="205" width="4" height="1" fill="url(#cb)"/>
<rect x="516" y="197" width="1" height="29" fill="#101010"/>
<rect x="514" y="203" width="6" height="1" fill="#181010"/>
<rect x="522" y="170" width="1" height="34" fill="#101010"/>
<rect x="520" y="175" width="6" height="28" fill="#0c2c50"/>
<rect x="521" y="176" width="4" height="26" fill="url(#cb)"/>
<rect x="527" y="162" width="1" height="23" fill="#101010"/>
<rect x="525" y="175" width="6" height="3" fill="#3c1014"/>
<rect x="526" y="176" width="4" height="1" fill="url(#cr)"/>
<rect x="533" y="142" width="1" height="37" fill="#101010"/>
<rect x="531" y="149" width="6" height="29" fill="#0c2c50"/>
<rect x="532" y="150" width="4" height="27" fill="url(#cb)"/>
<rect x="539" y="130" width="1" height="20" fill="#101010"/>
<rect x="537" y="145" width="6" height="5" fill="#0c2c50"/>
<rect x="538" y="146" width="4" height="3" fill="url(#cb)"/>
<rect x="545" y="142" width="1" height="17" fill="#101010"/>
<rect x="543" y="145" width="6" height="5" fill="#3c1014"/>
<rect x="544" y="146" width="4" height="3" fill="url(#cr)"/>
<rect x="551" y="151" width="1" height="28" fill="#101010"/>
<rect x="549" y="151" width="6" height="27" fill="#3c1014"/>
<rect x="550" y="152" width="4" height="25" fill="url(#cr)"/>
<rect x="557" y="173" width="1" height="15" fill="#101010"/>
<rect x="555" y="174" width="6" height="4" fill="#0c2c50"/>
<rect x="556" y="175" width="4" height="2" fill="url(#cb)"/>
<rect x="562" y="174" width="1" height="20" fill="#101010"/>
<rect x="560" y="174" width="6" height="15" fill="#3c1014"/>
<rect x="561" y="175" width="4" height="13" fill="url(#cr)"/>
<rect x="568" y="190" width="1" height="22" fill="#101010"/>
<rect x="566" y="190" width="6" height="18" fill="#3c1014"/>
<rect x="567" y="191" width="4" height="16" fill="url(#cr)"/>
<rect x="574" y="202" width="1" height="9" fill="#101010"/>
<rect x="572" y="202" width="6" height="5" fill="#0c2c50"/>
<rect x="573" y="203" width="4" height="3" fill="url(#cb)"/>
<rect x="580" y="202" width="1" height="9" fill="#101010"/>
<rect x="578" y="201" width="6" height="3" fill="#3c1014"/>
<rect x="579" y="202" width="4" height="1" fill="url(#cr)"/>
<rect x="586" y="199" width="1" height="10" fill="#101010"/>
<rect x="584" y="199" width="6" height="5" fill="#0c2c50"/>
<rect x="585" y="200" width="4" height="3" fill="url(#cb)"/>
<rect x="591" y="187" width="1" height="18" fill="#101010"/>
<rect x="589" y="190" width="6" height="8" fill="#0c2c50"/>
<rect x="590" y="191" width="4" height="6" fill="url(#cb)"/>
<rect x="597" y="187" width="1" height="28" fill="#101010"/>
<rect x="595" y="190" width="6" height="13" fill="#3c1014"/>
<rect x="596" y="191" width="4" height="11" fill="url(#cr)"/>
<rect x="603" y="195" width="1" height="10" fill="#101010"/>
<rect x="601" y="203" width="6" height="1" fill="#181010"/>
<rect x="609" y="194" width="1" height="22" fill="#101010"/>
<rect x="607" y="204" width="6" height="6" fill="#3c1014"/>
<rect x="608" y="205" width="4" height="4" fill="url(#cr)"/>
<rect x="615" y="207" width="1" height="12" fill="#101010"/>
<rect x="613" y="208" width="6" height="3" fill="#3c1014"/>
<rect x="614" y="209" width="4" height="1" fill="url(#cr)"/>
<rect x="620" y="189" width="1" height="20" fill="#101010"/>
<rect x="618" y="191" width="6" height="17" fill="#0c2c50"/>
<rect x="619" y="192" width="4" height="15" fill="url(#cb)"/>
<rect x="626" y="191" width="1" height="14" fill="#101010"/>
<rect x="624" y="191" width="6" height="10" fill="#3c1014"/>
<rect x="625" y="192" width="4" height="8" fill="url(#cr)"/>
<rect x="632" y="201" width="1" height="21" fill="#101010"/>
<rect x="630" y="201" width="6" height="17" fill="#3c1014"/>
<rect x="631" y="202" width="4" height="15" fill="url(#cr)"/>
<rect x="638" y="219" width="1" height="6" fill="#101010"/>
<rect x="636" y="219" width="6" height="3" fill="#3c1014"/>
<rect x="637" y="220" width="4" height="1" fill="url(#cr)"/>
<rect x="644" y="223" width="1" height="17" fill="#101010"/>
<rect x="642" y="223" width="6" height="12" fill="#3c1014"/>
<rect x="643" y="224" width="4" height="10" fill="url(#cr)"/>
<rect x="650" y="232" width="1" height="10" fill="#101010"/>
<rect x="648" y="235" width="6" height="1" fill="#181010"/>
<rect x="655" y="232" width="1" height="13" fill="#101010"/>
<rect x="653" y="235" width="6" height="10" fill="#3c1014"/>
<rect x="654" y="236" width="4" height="8" fill="url(#cr)"/>
<rect x="661" y="213" width="1" height="32" fill="#101010"/>
<rect x="659" y="229" width="6" height="16" fill="#3c1014"/>
<rect x="660" y="230" width="4" height="14" fill="url(#cr)"/>
<rect x="667" y="239" width="1" height="5" fill="#101010"/>
<rect x="665" y="244" width="6" height="1" fill="#181010"/>
</g>
<path d="M4.1 119.7 L8.6 117.8 L14.0 116.4 L19.4 116.4 L24.8 118.4 L31.3 120.3 L40.0 120.3 L47.5 117.3 L56.2 114.3 L69.1 114.3 L78.5 117.1 L86.6 121.1 L94.6 126.6 L100.0 129.4 L104.5 132.7 L109.0 135.0 L115.3 136.6 L124.3 137.2 L132.6 137.2 L136.0 135.0 L139.6 131.8 L142.3 128.7 L145.0 124.4 L148.6 119.9 L154.0 115.3 L157.6 112.8 L162.1 111.5 L170.2 112.1 L180.3 111.1 L188.3 109.5 L196.4 108.5 L202.4 108.5 L208.5 112.1 L214.5 117.1 L220.5 119.5 L230.6 119.1 L240.7 117.7 L248.7 117.1 L256.8 118.1 L264.8 121.1 L270.0 123.7 L276.8 126.0 L283.5 127.5 L290.3 126.0 L297.1 123.7 L303.9 124.4 L310.6 127.1 L318.5 133.4 L326.4 135.0 L335.5 135.7 L341.1 130.5 L346.7 127.1 L352.4 128.2 L360.3 133.4 L367.1 137.2 L376.1 144.0 L387.4 153.0 L396.4 161.0 L400.9 165.0 L410.0 166.6 L419.0 168.4 L428.1 169.8 L436.1 171.2 L446.2 171.6 L454.2 172.2 L462.3 174.6 L472.3 175.8 L482.4 176.2 L492.5 175.8 L500.5 178.3 L508.6 182.3 L514.6 187.3 L519.7 189.3 L524.7 187.3 L529.7 180.3 L535.8 166.2 L540.8 156.1 L544.0 151.2 L550.0 148.2 L556.0 146.6 L566.0 146.2 L580.0 146.8 L600.5 147.6 L620.7 148.2 L634.8 147.8 L642.8 146.6 L648.9 150.2 L654.9 160.3 L660.9 169.3 L666.6 174.0" stroke="#1c1c7c" stroke-width="1.0" fill="none" stroke-linejoin="round"/>
<path d="M4.0 213.7 L12.1 210.7 L20.1 208.1 L26.2 202.6 L32.2 199.6 L40.3 199.2 L46.3 204.6 L52.3 207.7 L60.4 210.0 L69.0 212.9 L78.1 216.3 L84.8 219.7 L91.6 222.4 L98.4 221.9 L107.4 219.7 L118.7 218.1 L134.5 218.5 L143.5 220.8 L150.7 224.2 L159.3 218.5 L168.4 210.6 L177.4 203.9 L186.4 199.3 L195.4 194.4 L202.2 185.8 L207.9 175.6 L211.2 169.5 L216.5 164.4 L222.5 164.0 L230.6 167.4 L238.7 168.5 L246.7 170.5 L254.8 173.5 L264.8 174.9 L276.9 176.1 L288.1 177.2 L294.1 183.2 L300.1 187.2 L306.2 188.3 L312.2 195.3 L318.3 202.3 L324.3 208.4 L330.3 208.8 L335.4 213.4 L340.4 226.5 L344.4 233.6 L349.5 238.6 L354.5 242.6 L360.5 245.6 L368.6 248.2 L376.6 248.7 L384.7 245.6 L392.7 241.6 L402.8 239.2 L412.9 239.2 L420.9 240.0 L428.1 241.7 L436.1 243.1 L444.2 244.3 L452.2 244.3 L458.3 239.7 L464.3 235.0 L472.3 232.6 L480.4 232.2 L488.5 232.6 L496.5 233.6 L504.6 233.6 L510.6 231.6 L515.6 228.6 L520.7 227.6 L526.8 231.6 L533.5 238.4 L540.3 244.0 L545.3 247.4 L551.6 245.1 L560.6 241.1 L574.2 239.5 L585.5 235.0 L596.7 231.6 L614.8 230.9 L620.4 228.9 L632.9 228.9 L639.6 233.9 L646.4 240.6 L653.2 244.7 L660.0 245.6 L666.7 244.0" stroke="#1c1c7c" stroke-width="1.0" fill="none" stroke-linejoin="round"/>
<path d="M4.0 347.2 L10.1 360.3 L15.1 374.4 L19.1 396.5 L21.7 416.7 L26.2 440.2 L33.2 483.5 L39.3 486.9 L45.3 498.6 L51.9 513.3 L57.4 511.6 L64.4 489.5 L69.5 460.3 L74.5 444.2 L80.5 449.2 L86.6 470.4 L93.0 474.4 L98.7 450.2 L102.7 414.0 L103.7 404.6 L108.7 365.3 L115.2 353.2 L121.2 353.2 L127.8 367.3 L132.9 369.4 L138.5 369.4 L143.9 352.2 L150.1 349.1 L156.1 351.7 L162.1 365.2 L169.2 382.3 L174.2 402.5 L180.3 417.6 L185.3 425.0 L190.3 405.5 L197.4 395.4 L203.4 373.3 L209.5 396.4 L214.5 422.6 L217.5 441.9 L220.1 462.3 L226.2 487.5 L233.2 478.4 L239.3 466.3 L244.7 455.3 L249.7 468.0 L255.4 459.3 L261.4 467.4 L267.4 458.3 L273.5 465.3 L280.5 450.2 L286.0 444.2 L290.6 464.3 L296.6 486.5 L302.7 502.0 L308.7 499.6 L314.4 484.5 L319.8 491.5 L324.8 490.5 L331.9 496.1 L337.5 483.5 L344.0 490.5 L349.1 492.1 L355.1 482.5 L360.1 462.3 L366.2 447.2 L372.2 441.2 L377.2 420.0 L378.3 418.6 L384.3 403.5 L389.3 376.3 L395.4 354.2 L401.4 337.5 L407.4 344.1 L413.5 366.3 L419.5 396.5 L425.6 424.4 L431.6 428.1 L436.6 454.3 L442.7 472.4 L448.7 486.1 L454.4 465.3 L460.4 459.9 L465.8 471.4 L471.9 485.1 L478.9 474.4 L485.0 457.3 L490.0 443.2 L494.1 428.6 L500.1 417.5 L506.2 410.5 L513.2 403.4 L519.3 392.3 L524.7 372.2 L530.3 368.2 L536.4 355.1 L542.4 359.1 L547.4 357.1 L552.5 378.3 L558.5 399.4 L566.6 430.6 L573.6 451.9 L577.2 462.3 L582.7 475.0 L588.3 471.4 L594.4 465.3 L600.4 472.4 L607.4 483.5 L612.5 502.2 L617.5 502.2 L623.6 488.5 L629.6 475.4 L635.6 479.4 L640.3 494.5 L647.6 511.4 L653.3 507.0 L658.3 508.2 L664.4 510.6 L670.0 512.6" stroke="#5c1a6c" stroke-width="1.0" fill="none" stroke-linejoin="round"/>
<path d="M4.0 338.5 L10.1 340.2 L16.1 345.2 L22.1 356.3 L28.2 370.4 L34.2 392.5 L40.3 412.6 L44.7 427.9 L48.3 438.2 L56.4 464.3 L64.4 484.5 L68.5 488.5 L74.5 486.9 L80.5 482.5 L86.6 479.4 L93.0 476.0 L99.7 466.3 L106.7 446.2 L114.8 426.1 L120.8 416.0 L124.8 408.6 L132.9 390.5 L140.5 374.3 L146.0 364.2 L152.1 359.8 L160.1 358.8 L168.2 363.2 L176.2 369.3 L184.3 379.3 L192.3 388.4 L200.4 394.0 L209.5 399.5 L216.5 407.5 L224.6 418.6 L230.2 424.6 L238.3 435.1 L244.3 444.2 L250.3 457.3 L256.4 464.3 L262.4 468.4 L268.5 467.4 L274.5 464.7 L280.5 461.3 L286.6 459.3 L292.6 461.3 L298.7 463.9 L308.7 472.4 L319.8 478.0 L324.8 482.5 L331.9 489.5 L338.9 492.1 L349.1 491.5 L358.1 487.5 L366.2 479.4 L373.2 472.4 L380.3 461.3 L388.3 447.2 L394.4 428.1 L397.4 416.6 L403.4 398.5 L409.5 385.4 L415.5 377.3 L420.5 374.3 L426.6 375.3 L431.6 378.3 L437.6 390.4 L443.7 406.5 L448.7 422.6 L451.7 430.1 L460.8 447.2 L468.9 460.3 L474.9 468.4 L480.9 473.4 L485.0 472.4 L490.0 469.4 L504.2 451.9 L514.2 437.6 L523.3 417.5 L531.3 400.4 L538.4 388.3 L546.4 378.3 L552.5 374.6 L559.5 374.6 L566.6 378.3 L572.6 388.3 L578.7 400.4 L584.7 416.5 L590.3 432.1 L598.4 448.2 L606.4 462.3 L617.5 478.8 L624.6 482.5 L632.6 483.1 L640.0 486.3 L644.5 489.9 L649.0 493.5 L653.5 495.3 L658.0 496.5 L664.3 497.1 L669.8 499.4" stroke="#121264" stroke-width="1.0" fill="none" stroke-linejoin="round"/>
<path d="M670.2 241.5l4.3 8h-9z" fill="#0808b0"/>
<g shape-rendering="crispEdges" fill="#000">
<rect x="689" y="52" width="1" height="261"/>
<rect x="690" y="60" width="4" height="1"/>
<rect x="690" y="85" width="4" height="1"/>
<rect x="690" y="110" width="4" height="1"/>
<rect x="690" y="135" width="4" height="1"/>
<rect x="690" y="160" width="4" height="1"/>
<rect x="690" y="185" width="4" height="1"/>
<rect x="690" y="210" width="4" height="1"/>
<rect x="690" y="235" width="4" height="1"/>
<rect x="690" y="260" width="4" height="1"/>
<rect x="690" y="285" width="4" height="1"/>
<rect x="690" y="310" width="4" height="1"/>
<rect x="690" y="54" width="2" height="1" fill="#484848"/>
<rect x="690" y="66" width="2" height="1" fill="#484848"/>
<rect x="690" y="73" width="2" height="1" fill="#484848"/>
<rect x="690" y="79" width="2" height="1" fill="#484848"/>
<rect x="690" y="92" width="2" height="1" fill="#484848"/>
<rect x="690" y="98" width="2" height="1" fill="#484848"/>
<rect x="690" y="104" width="2" height="1" fill="#484848"/>
<rect x="690" y="116" width="2" height="1" fill="#484848"/>
<rect x="690" y="123" width="2" height="1" fill="#484848"/>
<rect x="690" y="129" width="2" height="1" fill="#484848"/>
<rect x="690" y="142" width="2" height="1" fill="#484848"/>
<rect x="690" y="148" width="2" height="1" fill="#484848"/>
<rect x="690" y="154" width="2" height="1" fill="#484848"/>
<rect x="690" y="166" width="2" height="1" fill="#484848"/>
<rect x="690" y="173" width="2" height="1" fill="#484848"/>
<rect x="690" y="179" width="2" height="1" fill="#484848"/>
<rect x="690" y="192" width="2" height="1" fill="#484848"/>
<rect x="690" y="198" width="2" height="1" fill="#484848"/>
<rect x="690" y="204" width="2" height="1" fill="#484848"/>
<rect x="690" y="216" width="2" height="1" fill="#484848"/>
<rect x="690" y="223" width="2" height="1" fill="#484848"/>
<rect x="690" y="229" width="2" height="1" fill="#484848"/>
<rect x="690" y="242" width="2" height="1" fill="#484848"/>
<rect x="690" y="248" width="2" height="1" fill="#484848"/>
<rect x="690" y="254" width="2" height="1" fill="#484848"/>
<rect x="690" y="266" width="2" height="1" fill="#484848"/>
<rect x="690" y="273" width="2" height="1" fill="#484848"/>
<rect x="690" y="279" width="2" height="1" fill="#484848"/>
<rect x="690" y="292" width="2" height="1" fill="#484848"/>
<rect x="690" y="298" width="2" height="1" fill="#484848"/>
<rect x="690" y="304" width="2" height="1" fill="#484848"/>
<rect x="689" y="319" width="1" height="202"/>
<rect x="690" y="520" width="4" height="1"/>
<rect x="690" y="515" width="2" height="1" fill="#484848"/>
<rect x="690" y="510" width="2" height="1" fill="#484848"/>
<rect x="690" y="505" width="2" height="1" fill="#484848"/>
<rect x="690" y="501" width="4" height="1"/>
<rect x="690" y="496" width="2" height="1" fill="#484848"/>
<rect x="690" y="491" width="2" height="1" fill="#484848"/>
<rect x="690" y="486" width="2" height="1" fill="#484848"/>
<rect x="690" y="481" width="4" height="1"/>
<rect x="690" y="476" width="2" height="1" fill="#484848"/>
<rect x="690" y="471" width="2" height="1" fill="#484848"/>
<rect x="690" y="466" width="2" height="1" fill="#484848"/>
<rect x="690" y="462" width="4" height="1"/>
<rect x="690" y="457" width="2" height="1" fill="#484848"/>
<rect x="690" y="452" width="2" height="1" fill="#484848"/>
<rect x="690" y="447" width="2" height="1" fill="#484848"/>
<rect x="690" y="443" width="4" height="1"/>
<rect x="690" y="438" width="2" height="1" fill="#484848"/>
<rect x="690" y="433" width="2" height="1" fill="#484848"/>
<rect x="690" y="428" width="2" height="1" fill="#484848"/>
<rect x="690" y="423" width="4" height="1"/>
<rect x="690" y="418" width="2" height="1" fill="#484848"/>
<rect x="690" y="413" width="2" height="1" fill="#484848"/>
<rect x="690" y="408" width="2" height="1" fill="#484848"/>
<rect x="690" y="404" width="4" height="1"/>
<rect x="690" y="399" width="2" height="1" fill="#484848"/>
<rect x="690" y="394" width="2" height="1" fill="#484848"/>
<rect x="690" y="389" width="2" height="1" fill="#484848"/>
<rect x="690" y="385" width="4" height="1"/>
<rect x="690" y="380" width="2" height="1" fill="#484848"/>
<rect x="690" y="375" width="2" height="1" fill="#484848"/>
<rect x="690" y="370" width="2" height="1" fill="#484848"/>
<rect x="690" y="366" width="4" height="1"/>
<rect x="690" y="361" width="2" height="1" fill="#484848"/>
<rect x="690" y="356" width="2" height="1" fill="#484848"/>
<rect x="690" y="351" width="2" height="1" fill="#484848"/>
<rect x="690" y="347" width="4" height="1"/>
<rect x="690" y="342" width="2" height="1" fill="#484848"/>
<rect x="690" y="337" width="2" height="1" fill="#484848"/>
<rect x="690" y="332" width="2" height="1" fill="#484848"/>
<rect x="690" y="327" width="4" height="1"/>
<rect x="690" y="322" width="2" height="1" fill="#484848"/>
<rect x="10" y="520" width="665" height="1"/>
<rect x="22" y="521" width="1" height="4"/>
<rect x="34" y="521" width="1" height="2"/>
<rect x="45" y="521" width="1" height="2"/>
<rect x="57" y="521" width="1" height="2"/>
<rect x="69" y="521" width="1" height="4"/>
<rect x="80" y="521" width="1" height="2"/>
<rect x="92" y="521" width="1" height="2"/>
<rect x="104" y="521" width="1" height="2"/>
<rect x="115" y="521" width="1" height="4"/>
<rect x="127" y="521" width="1" height="2"/>
<rect x="139" y="521" width="1" height="2"/>
<rect x="150" y="521" width="1" height="2"/>
<rect x="162" y="521" width="1" height="4"/>
<rect x="174" y="521" width="1" height="2"/>
<rect x="185" y="521" width="1" height="2"/>
<rect x="197" y="521" width="1" height="2"/>
<rect x="209" y="521" width="1" height="4"/>
<rect x="220" y="521" width="1" height="2"/>
<rect x="232" y="521" width="1" height="2"/>
<rect x="244" y="521" width="1" height="2"/>
<rect x="255" y="521" width="1" height="4"/>
<rect x="267" y="521" width="1" height="2"/>
<rect x="279" y="521" width="1" height="2"/>
<rect x="290" y="521" width="1" height="2"/>
<rect x="302" y="521" width="1" height="4"/>
<rect x="312" y="521" width="1" height="2"/>
<rect x="322" y="521" width="1" height="2"/>
<rect x="333" y="521" width="1" height="2"/>
<rect x="343" y="521" width="1" height="4"/>
<rect x="355" y="521" width="1" height="2"/>
<rect x="366" y="521" width="1" height="2"/>
<rect x="378" y="521" width="1" height="2"/>
<rect x="390" y="521" width="1" height="4"/>
<rect x="401" y="521" width="1" height="2"/>
<rect x="413" y="521" width="1" height="2"/>
<rect x="425" y="521" width="1" height="2"/>
<rect x="436" y="521" width="1" height="4"/>
<rect x="448" y="521" width="1" height="2"/>
<rect x="460" y="521" width="1" height="2"/>
<rect x="471" y="521" width="1" height="2"/>
<rect x="483" y="521" width="1" height="4"/>
<rect x="495" y="521" width="1" height="2"/>
<rect x="506" y="521" width="1" height="2"/>
<rect x="518" y="521" width="1" height="2"/>
<rect x="530" y="521" width="1" height="4"/>
<rect x="541" y="521" width="1" height="2"/>
<rect x="553" y="521" width="1" height="2"/>
<rect x="565" y="521" width="1" height="2"/>
<rect x="576" y="521" width="1" height="4"/>
<rect x="588" y="521" width="1" height="2"/>
<rect x="600" y="521" width="1" height="2"/>
<rect x="611" y="521" width="1" height="2"/>
<rect x="623" y="521" width="1" height="4"/>
<rect x="633" y="521" width="1" height="2"/>
<rect x="643" y="521" width="1" height="2"/>
<rect x="654" y="521" width="1" height="2"/>
<rect x="664" y="521" width="1" height="4"/>
<rect x="10" y="521" width="1" height="2"/>
</g>
<g font-family="Liberation Sans, Arial, sans-serif" font-size="11" fill="#000">
<text x="694.3" y="64.4">123.80</text>
<text x="694.3" y="89.4">123.60</text>
<text x="694.3" y="114.4">123.40</text>
<text x="694.3" y="139.4">123.20</text>
<text x="694.3" y="164.4">123.00</text>
<text x="694.3" y="189.4">122.80</text>
<text x="694.3" y="214.4">122.60</text>
<text x="694.3" y="239.4">122.40</text>
<text x="694.3" y="264.4">122.20</text>
<text x="694.3" y="289.4">122.00</text>
<text x="694.3" y="314.4">121.80</text>
<text x="694.3" y="505.4">10</text>
<text x="694.3" y="485.4">20</text>
<text x="694.3" y="466.4">30</text>
<text x="694.3" y="447.4">40</text>
<text x="694.3" y="427.4">50</text>
<text x="694.3" y="408.4">60</text>
<text x="694.3" y="389.4">70</text>
<text x="694.3" y="370.4">80</text>
<text x="694.3" y="351.4">90</text>
<text x="694.3" y="331.4">100</text>
<text x="694.3" y="524.4">0</text>
<text x="7.8" y="537">08:00</text>
<text x="54.5" y="537">10:00</text>
<text x="101.2" y="537">12:00</text>
<text x="147.9" y="537">14:00</text>
<text x="194.6" y="537">16:00</text>
<text x="241.2" y="537">18:00</text>
<text x="287.9" y="537">20:00</text>
<text x="328.8" y="537">08:00</text>
<text x="375.5" y="537">10:00</text>
<text x="422.2" y="537">12:00</text>
<text x="468.9" y="537">14:00</text>
<text x="515.6" y="537">16:00</text>
<text x="562.2" y="537">18:00</text>
<text x="608.9" y="537">20:00</text>
<text x="649.8" y="537">08:00</text>
<text x="25.6" y="549">28-Jan</text>
<text x="346.6" y="549">29-Jan</text>
<text x="667.6" y="549">30-Jan</text>
</g>
<g shape-rendering="crispEdges"><rect x="730" y="237" width="18" height="17" fill="#d8a0d0"/><rect x="691" y="237" width="39" height="18" fill="#000"/><rect x="692" y="238" width="37" height="16" fill="#fff"/></g>
<text x="694.3" y="250" font-family="Liberation Sans, Arial, sans-serif" font-size="11" fill="#000">122.32</text>
<rect x="695" y="504" width="25" height="18" fill="#000" shape-rendering="crispEdges"/>
<text x="695.5" y="515" font-family="Liberation Sans, Arial, sans-serif" font-size="11" fill="#fff">4.00</text>
<g shape-rendering="crispEdges"><rect x="30" y="239" width="91" height="16" fill="#000"/><rect x="31" y="240" width="89" height="14" fill="#fff"/></g>
<text x="32" y="249.6" stroke="#000" stroke-width=".15" font-family="Liberation Sans, Arial, sans-serif" font-size="9" fill="#000" textLength="85.5" lengthAdjust="spacingAndGlyphs">122.30 Average Price</text>
<rect x="12" y="52" width="124" height="12" fill="#b4d4fc" shape-rendering="crispEdges"/>
<text x="12.4" y="61" font-family="Liberation Sans, Arial, sans-serif" font-size="9" fill="#080828" stroke="#080828" stroke-width=".25" textLength="123" lengthAdjust="spacing">Bollinger Bands (20 2.000000)</text>
<rect x="12" y="322" width="136" height="12" fill="#b4d4fc" shape-rendering="crispEdges"/>
<text x="12.4" y="331" font-family="Liberation Sans, Arial, sans-serif" font-size="9" fill="#080828" stroke="#080828" stroke-width=".25" textLength="135" lengthAdjust="spacing">Slow Stochastic Oscillator (14 8)</text>
</svg>
</body></html>
